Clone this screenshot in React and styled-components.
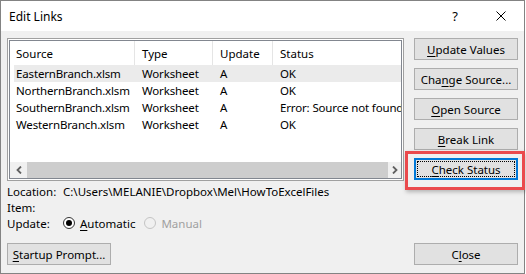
import React from "react";
import styled, { createGlobalStyle, css } from "styled-components";

const Global = createGlobalStyle`
  html, body { margin: 0; padding: 0; background: #ffffff; }
  body {
    font-family: "Noto Sans", "Open Sans", sans-serif;
    font-size: 11.5px;
    color: #000000;
  }
  * { box-sizing: border-box; }
`;

const Window = styled.div`
  width: 525px;
  height: 274px;
  border: 1px solid #838383;
  background: #f0f0f0;
  display: flex;
  flex-direction: column;
`;

const TitleBar = styled.div`
  height: 30px;
  background: #ffffff;
  display: flex;
  align-items: center;
  padding-left: 8px;
`;

const Title = styled.div`
  flex: 1;
  font-size: 12px;
`;

const TitleButton = styled.div`
  width: 46px;
  height: 30px;
  display: flex;
  align-items: center;
  justify-content: center;
  font-size: 13px;
`;

const Client = styled.div`
  flex: 1;
  display: flex;
  flex-direction: column;
  padding: 7px 6px 8px 6px;
`;

const MainRow = styled.div`
  display: flex;
  gap: 10px;
`;

const ListOuter = styled.div`
  width: 397px;
  height: 143px;
  border: 1px solid #a0a0a0;
  padding: 1px;
  background: #ffffff;
`;

const ListInner = styled.div`
  height: 100%;
  border: 1px solid #828790;
  display: flex;
  flex-direction: column;
  overflow: hidden;
`;

const Header = styled.div`
  height: 24px;
  display: grid;
  grid-template-columns: 125px 78px 60px 1fr;
`;

const HeaderCell = styled.div`
  display: flex;
  align-items: center;
  padding-left: ${(p) => (p.$first ? 6 : 7)}px;
  border-right: ${(p) => (p.$last ? "none" : "1px solid #e5e5e5")};
  white-space: nowrap;
`;

const Rows = styled.div`
  flex: 1;
`;

const Row = styled.div`
  height: 17px;
  margin-left: 4px;
  display: grid;
  grid-template-columns: 121px 78px 60px 1fr;
  align-items: center;
  letter-spacing: -0.15px;
  background: ${(p) => (p.$selected ? "#ebebeb" : "transparent")};
`;

const Cell = styled.div`
  padding-left: ${(p) => (p.$first ? 2 : 7)}px;
  white-space: nowrap;
`;

const HScroll = styled.div`
  height: 16px;
  display: flex;
  background: #f0f0f0;
`;

const ScrollArrow = styled.div`
  width: ${(p) => p.$w}px;
  display: flex;
  align-items: center;
  justify-content: center;
`;

const ScrollThumb = styled.div`
  flex: 1;
  background: #cdcdcd;
`;

const ButtonColumn = styled.div`
  width: 104px;
  display: flex;
  flex-direction: column;
  gap: 8px;
`;

const Button = styled.div`
  position: relative;
  width: 104px;
  height: 22px;
  background: #e1e1e1;
  border: 1px solid #adadad;
  display: flex;
  align-items: center;
  justify-content: center;
  white-space: nowrap;
  ${(p) =>
    p.$focused &&
    css`
      border: 2px solid #0078d7;
    `}
`;

const FocusRect = styled.div`
  position: absolute;
  inset: 1px;
  border: 1px dotted #000000;
  pointer-events: none;
`;

const Highlight = styled.div`
  position: absolute;
  left: -11px;
  top: -9px;
  width: 120px;
  height: 39px;
  border: 3px solid #ea4a4d;
  box-shadow: 1px 2px 4px rgba(0, 0, 0, 0.25);
  pointer-events: none;
`;

const Key = styled.span`
  text-decoration: underline;
  text-underline-offset: 2px;
`;

const Info = styled.div`
  margin-top: 2px;
  display: flex;
  flex-direction: column;
`;

const InfoLine = styled.div`
  height: 16px;
  display: flex;
  align-items: center;
  white-space: nowrap;
`;

const Label = styled.div`
  width: 56px;
`;

const RadioGroup = styled.div`
  display: flex;
  align-items: center;
  gap: 9px;
`;

const RadioOption = styled.label`
  display: flex;
  align-items: center;
  gap: 5px;
  color: ${(p) => (p.$disabled ? "#a0a0a0" : "#000000")};
`;

const RadioCircle = styled.span`
  width: 12px;
  height: 12px;
  border-radius: 50%;
  border: 1px solid ${(p) => (p.$disabled ? "#c4c4c4" : "#333333")};
  background: ${(p) => (p.$disabled ? "#f0f0f0" : "#ffffff")};
  display: flex;
  align-items: center;
  justify-content: center;
  &::after {
    content: "";
    display: ${(p) => (p.$checked ? "block" : "none")};
    width: 6px;
    height: 6px;
    border-radius: 50%;
    background: #000000;
  }
`;

const Footer = styled.div`
  margin-top: auto;
  display: flex;
  justify-content: space-between;
`;

const Chevron = ({ dir }) => (
  <svg width="6" height="8" viewBox="0 0 6 8">
    <polyline
      points={dir === "left" ? "5,0.5 1.5,4 5,7.5" : "1,0.5 4.5,4 1,7.5"}
      fill="none"
      stroke="#606060"
      strokeWidth="1.8"
    />
  </svg>
);

const CloseGlyph = () => (
  <svg width="10" height="10" viewBox="0 0 10 10">
    <path d="M0.5 0.5 L9.5 9.5 M9.5 0.5 L0.5 9.5" stroke="#000" strokeWidth="1" />
  </svg>
);

const rows = [
  { source: "EasternBranch.xlsm", type: "Worksheet", update: "A", status: "OK" },
  { source: "NorthernBranch.xlsm", type: "Worksheet", update: "A", status: "OK" },
  { source: "SouthernBranch.xlsm", type: "Worksheet", update: "A", status: "Error: Source not found" },
  { source: "WesternBranch.xlsm", type: "Worksheet", update: "A", status: "OK" },
];

export default function App() {
  return (
    <>
      <Global />
      <Window>
        <TitleBar>
          <Title>Edit Links</Title>
          <TitleButton>?</TitleButton>
          <TitleButton>
            <CloseGlyph />
          </TitleButton>
        </TitleBar>
        <Client>
          <MainRow>
            <ListOuter>
              <ListInner>
                <Header>
                  <HeaderCell $first>Source</HeaderCell>
                  <HeaderCell>Type</HeaderCell>
                  <HeaderCell>Update</HeaderCell>
                  <HeaderCell $last>Status</HeaderCell>
                </Header>
                <Rows>
                  {rows.map((r, i) => (
                    <Row key={r.source} $selected={i === 0}>
                      <Cell $first>{r.source}</Cell>
                      <Cell>{r.type}</Cell>
                      <Cell>{r.update}</Cell>
                      <Cell>{r.status}</Cell>
                    </Row>
                  ))}
                </Rows>
                <HScroll>
                  <ScrollArrow $w={17}>
                    <Chevron dir="left" />
                  </ScrollArrow>
                  <ScrollThumb />
                  <ScrollArrow $w={13}>
                    <Chevron dir="right" />
                  </ScrollArrow>
                </HScroll>
              </ListInner>
            </ListOuter>
            <ButtonColumn>
              <Button>
                <span><Key>U</Key>pdate Values</span>
              </Button>
              <Button>
                <span>Cha<Key>n</Key>ge Source...</span>
              </Button>
              <Button>
                <span><Key>O</Key>pen Source</span>
              </Button>
              <Button>
                <span><Key>B</Key>reak Link</span>
              </Button>
              <Button $focused>
                <FocusRect />
                <span><Key>C</Key>heck Status</span>
                <Highlight />
              </Button>
            </ButtonColumn>
          </MainRow>
          <Info>
            <InfoLine>
              <Label>Location:</Label>
              <span>C:\Users\MELANIE\Dropbox\Mel\HowToExcelFiles</span>
            </InfoLine>
            <InfoLine>
              <Label>Item:</Label>
            </InfoLine>
            <InfoLine>
              <Label>Update:</Label>
              <RadioGroup>
                <RadioOption>
                  <RadioCircle $checked />
                  <span><Key>A</Key>utomatic</span>
                </RadioOption>
                <RadioOption $disabled>
                  <RadioCircle $disabled />
                  <span>Manual</span>
                </RadioOption>
              </RadioGroup>
            </InfoLine>
          </Info>
          <Footer>
            <Button>
              <span><Key>S</Key>tartup Prompt...</span>
            </Button>
            <Button>
              <span>C<Key>l</Key>ose</span>
            </Button>
          </Footer>
        </Client>
      </Window>
    </>
  );
}
